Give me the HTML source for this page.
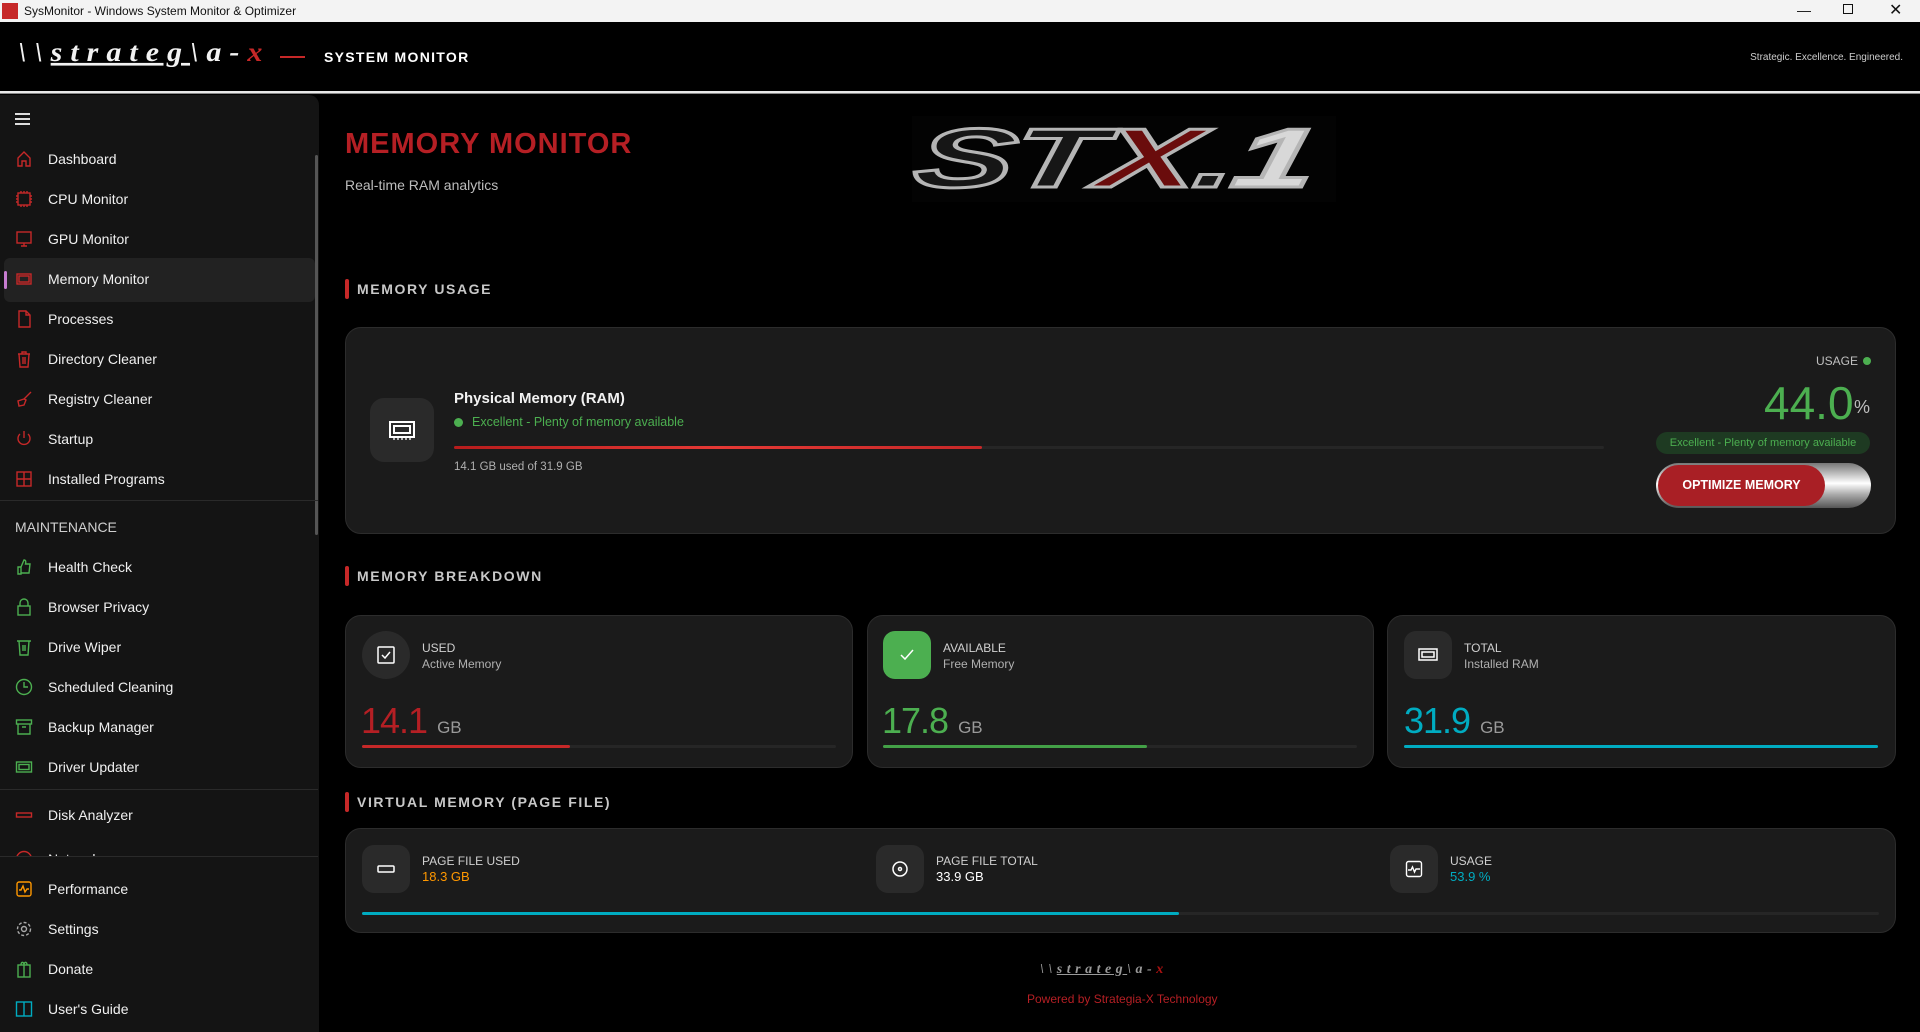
<!DOCTYPE html>
<html><head><meta charset="utf-8">
<style>
*{margin:0;padding:0;box-sizing:border-box}
body{width:1920px;height:1032px;background:#000;font-family:"Liberation Sans",sans-serif;color:#fff;position:relative;overflow:hidden}
.abs{position:absolute}
.tb{left:0;top:0;width:1920px;height:22px;background:#f3f3f3;color:#111;font-size:12px}
.hdr{left:0;top:22px;width:1920px;height:69px;background:#000}
.line{left:0;top:91px;width:1920px;height:3px;background:#e8e8e8;border-bottom:1px solid #888}
.side{left:0;top:95px;width:319px;height:937px;background:#141414;border-top-right-radius:10px}
.it{position:absolute;left:0;width:314px;height:40px;font-size:14px;color:#f0f0f0;display:flex;align-items:center}
.it svg{position:absolute;left:15px;width:18px;height:18px}
.it span{position:absolute;left:48px}
.sep{position:absolute;left:0;width:318px;height:1px;background:#2a2a2a}
.card{position:absolute;background:#1b1b1b;border:1px solid #2c2c2c;border-radius:16px}
.sec{position:absolute;left:345px;font-size:14px;letter-spacing:1.6px;color:#c8c8c8;font-weight:bold;padding-left:12px;height:20px;line-height:20px}
.sec:before{content:"";position:absolute;left:0;top:0;width:4px;height:20px;background:#c62828;border-radius:2px}
.ib{position:absolute;width:48px;height:48px;border-radius:12px;background:#2a2a2a;display:flex;align-items:center;justify-content:center}
.lbl{position:absolute;font-size:12px;color:#d0d0d0;line-height:16px}
.sub{color:#b0b0b0}
.val{position:absolute;font-size:36px;font-weight:300;letter-spacing:-1px}
.val small{font-size:17px;color:#9a9a9a;margin-left:10px;letter-spacing:0}
.track{position:absolute;height:3px;background:#262626;border-radius:2px}
.fill{position:absolute;left:0;top:0;height:3px;border-radius:2px}
</style></head><body>
<div class="abs tb">
  <div class="abs" style="left:2px;top:3px;width:16px;height:16px;background:#c62828"></div>
  <div class="abs" style="left:24px;top:4px">SysMonitor - Windows System Monitor &amp; Optimizer</div>
  <div class="abs" style="left:1797px;top:2px;font-size:14px">&#8212;</div>
  <div class="abs" style="left:1843px;top:4px;width:10px;height:10px;border:1px solid #111"></div>
  <div class="abs" style="left:1889px;top:0px;font-size:16px">&#10005;</div>
</div>
<div class="abs hdr">
  <div class="abs" style="left:18px;top:14px;font-family:'Liberation Serif',serif;font-style:italic;font-weight:bold;font-size:30px;letter-spacing:8px;color:#f2f2f2;transform:scaleY(0.9)">\\<span style="text-decoration:underline">strateg</span>\a-<span style="color:#c62828">x</span></div>
  <div class="abs" style="left:280px;top:34px;width:25px;height:2px;background:#c62828"></div>
  <div class="abs" style="left:324px;top:27px;font-size:14px;font-weight:bold;letter-spacing:1.3px">SYSTEM MONITOR</div>
  <div class="abs" style="right:17px;top:30px;font-size:10px;color:#ccc">Strategic. Excellence. Engineered.</div>
</div>
<div class="abs line"></div>

<div class="abs side">
  <div class="abs" style="left:15px;top:18px;width:15px;height:2px;background:#ddd;box-shadow:0 5px 0 #ddd,0 10px 0 #ddd"></div>
  <div class="abs" style="left:315px;top:60px;width:3px;height:380px;background:#555;border-radius:2px"></div>
</div>
<div class="abs" style="left:4px;top:258px;width:311px;height:44px;background:#222;border-radius:6px"></div>
<div class="abs" style="left:4px;top:271px;width:3px;height:18px;background:#c77dd0;border-radius:2px"></div>

<!-- menu -->
<div class="it" style="top:139px"><svg viewBox="0 0 18 18" fill="none" stroke="#c62828" stroke-width="1.4"><path d="M3 8L9 2l6 6v8h-4v-5H7v5H3z"/></svg><span>Dashboard</span></div>
<div class="it" style="top:179px"><svg viewBox="0 0 18 18" fill="none" stroke="#c62828" stroke-width="1.4"><rect x="3" y="3" width="12" height="12"/><path d="M6 1v2M9 1v2M12 1v2M6 15v2M9 15v2M12 15v2M1 6h2M1 9h2M1 12h2M15 6h2M15 9h2M15 12h2"/></svg><span>CPU Monitor</span></div>
<div class="it" style="top:219px"><svg viewBox="0 0 18 18" fill="none" stroke="#c62828" stroke-width="1.4"><rect x="2" y="2" width="14" height="11"/><path d="M9 13v3M6 16h6"/></svg><span>GPU Monitor</span></div>
<div class="it" style="top:259px"><svg viewBox="0 0 18 18" fill="none" stroke="#c62828" stroke-width="1.4"><rect x="2" y="4" width="14" height="10"/><rect x="4" y="6" width="10" height="6"/></svg><span>Memory Monitor</span></div>
<div class="it" style="top:299px"><svg viewBox="0 0 18 18" fill="none" stroke="#c62828" stroke-width="1.4"><path d="M4 1h7l4 4v12H4z M11 1v4h4"/></svg><span>Processes</span></div>
<div class="it" style="top:339px"><svg viewBox="0 0 18 18" fill="none" stroke="#c62828" stroke-width="1.4"><path d="M3 4h12M7 4V2h4v2M4 4l1 13h8l1-13M8 7v7M10 7v7"/></svg><span>Directory Cleaner</span></div>
<div class="it" style="top:379px"><svg viewBox="0 0 18 18" fill="none" stroke="#c62828" stroke-width="1.4"><path d="M16 2L9 9M9 9l-6 2 1 5 5-1 2-5z"/></svg><span>Registry Cleaner</span></div>
<div class="it" style="top:419px"><svg viewBox="0 0 18 18" fill="none" stroke="#c62828" stroke-width="1.4"><path d="M9 1v7M5 4a6 6 0 1 0 8 0"/></svg><span>Startup</span></div>
<div class="it" style="top:459px"><svg viewBox="0 0 18 18" fill="none" stroke="#c62828" stroke-width="1.4"><rect x="2" y="2" width="14" height="14"/><path d="M9 2v14M2 9h14"/></svg><span>Installed Programs</span></div>
<div class="sep" style="top:500px"></div>
<div class="abs" style="left:15px;top:519px;font-size:14px;color:#cfcfcf">MAINTENANCE</div>
<div class="it" style="top:547px"><svg viewBox="0 0 18 18" fill="none" stroke="#4caf50" stroke-width="1.4"><path d="M3 9h3v7H3zM6 9l3-7c2 0 2 2 1.5 4H15l-1 9H6"/></svg><span>Health Check</span></div>
<div class="it" style="top:587px"><svg viewBox="0 0 18 18" fill="none" stroke="#4caf50" stroke-width="1.4"><rect x="3" y="8" width="12" height="9"/><path d="M5 8V5a4 4 0 0 1 8 0v3"/></svg><span>Browser Privacy</span></div>
<div class="it" style="top:627px"><svg viewBox="0 0 18 18" fill="none" stroke="#4caf50" stroke-width="1.4"><path d="M2 3h14M4 3l1 14h8l1-14M8 7v6M10 7v6"/></svg><span>Drive Wiper</span></div>
<div class="it" style="top:667px"><svg viewBox="0 0 18 18" fill="none" stroke="#4caf50" stroke-width="1.4"><circle cx="9" cy="9" r="7.5"/><path d="M9 4v5h4"/></svg><span>Scheduled Cleaning</span></div>
<div class="it" style="top:707px"><svg viewBox="0 0 18 18" fill="none" stroke="#4caf50" stroke-width="1.4"><rect x="1.5" y="2" width="15" height="4"/><path d="M3 6v10h12V6M7 9h4"/></svg><span>Backup Manager</span></div>
<div class="it" style="top:747px"><svg viewBox="0 0 18 18" fill="none" stroke="#4caf50" stroke-width="1.4"><rect x="1.5" y="4" width="15" height="10"/><rect x="4" y="6.5" width="10" height="5"/></svg><span>Driver Updater</span></div>
<div class="sep" style="top:789px"></div>
<div class="it" style="top:795px"><svg viewBox="0 0 18 18" fill="none" stroke="#c62828" stroke-width="1.4"><rect x="1.5" y="7" width="15" height="4"/></svg><span>Disk Analyzer</span></div>
<div class="abs" style="left:0;top:842px;width:318px;height:14px;overflow:hidden"><div class="it" style="top:-3px"><svg viewBox="0 0 18 18" fill="none" stroke="#c62828" stroke-width="1.4"><circle cx="9" cy="9" r="7.5"/></svg><span>Network</span></div></div>
<div class="sep" style="top:856px"></div>
<div class="it" style="top:869px"><svg viewBox="0 0 18 18" fill="none" stroke="#ff9800" stroke-width="1.4"><rect x="2" y="2" width="14" height="14" rx="2"/><path d="M4 10h2l2-4 2 6 2-3h2"/></svg><span>Performance</span></div>
<div class="it" style="top:909px"><svg viewBox="0 0 18 18" fill="none" stroke="#aaa" stroke-width="1.4"><circle cx="9" cy="9" r="2.5"/><circle cx="9" cy="9" r="6.5" stroke-dasharray="3 2"/></svg><span>Settings</span></div>
<div class="it" style="top:949px"><svg viewBox="0 0 18 18" fill="none" stroke="#4caf50" stroke-width="1.4"><rect x="3" y="5" width="12" height="12"/><path d="M9 5v12M6 5c0-4 3-3 3 0c0-3 3-4 3 0"/></svg><span>Donate</span></div>
<div class="it" style="top:989px"><svg viewBox="0 0 18 18" fill="none" stroke="#00acc1" stroke-width="1.4"><rect x="1.5" y="2" width="15" height="14"/><path d="M9 2v14"/></svg><span>User's Guide</span></div>

<!-- main -->
<div class="abs" style="left:345px;top:128px;font-size:29px;font-weight:bold;color:#b51f24;letter-spacing:1px">MEMORY MONITOR</div>
<div class="abs" style="left:345px;top:177px;font-size:14px;color:#bdbdbd">Real-time RAM analytics</div>
<div class="abs" style="left:912px;top:116px;width:424px;height:86px;background:#030303"></div>
<div class="abs" style="left:925px;top:110px;font-size:84px;font-weight:bold;font-style:italic;letter-spacing:-2px;color:#161616;-webkit-text-stroke:3px #b5b5b5;transform-origin:0 0;transform:scaleX(1.78) skewX(-6deg)">ST<span style="color:#6a0c0c">X</span>.<span style="color:#d8d8d8">1</span></div>

<div class="sec" style="top:279px">MEMORY USAGE</div>
<div class="card" style="left:345px;top:327px;width:1551px;height:207px"></div>
<div class="ib" style="left:370px;top:398px;width:64px;height:64px;border-radius:14px"><svg width="28" height="22" viewBox="0 0 28 22" fill="none" stroke="#fff" stroke-width="2"><rect x="2" y="3" width="24" height="15"/><rect x="6" y="7" width="16" height="7"/><path d="M6 19v2M10 19v2M14 19v2M18 19v2M22 19v2" stroke-width="1.3"/></svg></div>
<div class="abs" style="left:454px;top:390px;font-size:15px;font-weight:bold;color:#f2f2f2">Physical Memory (RAM)</div>
<div class="abs" style="left:454px;top:418px;width:9px;height:9px;border-radius:50%;background:#4caf50"></div>
<div class="abs" style="left:472px;top:415px;font-size:12.5px;color:#4caf50">Excellent - Plenty of memory available</div>
<div class="track" style="left:454px;top:446px;width:1150px"><div class="fill" style="width:528px;background:linear-gradient(90deg,#b71c1c,#e53935,#c62828)"></div></div>
<div class="abs" style="left:454px;top:461px;font-size:11.5px;color:#b0b0b0">14.1 GB used of 31.9 GB</div>
<div class="abs" style="left:1816px;top:354px;font-size:12px;color:#c0c0c0">USAGE</div>
<div class="abs" style="left:1863px;top:357px;width:8px;height:8px;border-radius:50%;background:#4caf50"></div>
<div class="abs" style="left:1764px;top:376px;font-size:46px;font-weight:300;color:#4caf50">44.0</div>
<div class="abs" style="left:1854px;top:397px;font-size:18px;color:#bdbdbd">%</div>
<div class="abs" style="left:1656px;top:432px;width:214px;height:22px;border-radius:11px;background:#1e3a22;color:#4caf50;font-size:11px;text-align:center;line-height:22px">Excellent - Plenty of memory available</div>
<div class="abs" style="left:1656px;top:463px;width:215px;height:45px;border-radius:23px;background:linear-gradient(180deg,#777,#fff 45%,#aaa 70%,#555)"></div>
<div class="abs" style="left:1658px;top:465px;width:167px;height:41px;border-radius:21px;background:#a91f25;color:#fff;font-size:12.5px;font-weight:bold;text-align:center;line-height:41px">OPTIMIZE MEMORY</div>

<div class="sec" style="top:566px">MEMORY BREAKDOWN</div>
<div class="card" style="left:345px;top:615px;width:508px;height:153px"></div>
<div class="card" style="left:867px;top:615px;width:507px;height:153px"></div>
<div class="card" style="left:1387px;top:615px;width:509px;height:153px"></div>
<div class="ib" style="left:362px;top:631px;border-radius:50%"><svg width="20" height="20" viewBox="0 0 20 20" fill="none" stroke="#fff" stroke-width="1.5"><rect x="2" y="2" width="16" height="16" rx="1"/><path d="M6 10l3 3 5-6"/></svg></div>
<div class="ib" style="left:883px;top:631px;background:#4caf50"><svg width="16" height="14" viewBox="0 0 16 14" fill="none" stroke="#fff" stroke-width="1.5"><path d="M2 7l4 4 8-9"/></svg></div>
<div class="ib" style="left:1404px;top:631px"><svg width="20" height="16" viewBox="0 0 20 16" fill="none" stroke="#fff" stroke-width="1.5"><rect x="1" y="2" width="18" height="11"/><rect x="4" y="5" width="12" height="5"/></svg></div>
<div class="lbl" style="left:422px;top:640px">USED<br><span class="sub">Active Memory</span></div>
<div class="lbl" style="left:943px;top:640px">AVAILABLE<br><span class="sub">Free Memory</span></div>
<div class="lbl" style="left:1464px;top:640px">TOTAL<br><span class="sub">Installed RAM</span></div>
<div class="val" style="left:361px;top:700px;color:#b51f24">14.1<small>GB</small></div>
<div class="val" style="left:882px;top:700px;color:#4caf50">17.8<small>GB</small></div>
<div class="val" style="left:1404px;top:700px;color:#00acc1">31.9<small>GB</small></div>
<div class="track" style="left:362px;top:745px;width:474px"><div class="fill" style="width:208px;background:#c62828"></div></div>
<div class="track" style="left:883px;top:745px;width:474px"><div class="fill" style="width:264px;background:#43a047"></div></div>
<div class="track" style="left:1404px;top:745px;width:474px"><div class="fill" style="width:474px;background:#00acc1"></div></div>

<div class="sec" style="top:792px">VIRTUAL MEMORY (PAGE FILE)</div>
<div class="card" style="left:345px;top:828px;width:1551px;height:105px"></div>
<div class="ib" style="left:362px;top:845px"><svg width="18" height="10" viewBox="0 0 18 10" fill="none" stroke="#fff" stroke-width="1.5"><rect x="1" y="2" width="16" height="6" rx="1"/></svg></div>
<div class="ib" style="left:876px;top:845px"><svg width="18" height="18" viewBox="0 0 18 18" fill="none" stroke="#fff" stroke-width="1.5"><circle cx="9" cy="9" r="7"/><circle cx="9" cy="9" r="1.5"/></svg></div>
<div class="ib" style="left:1390px;top:845px"><svg width="18" height="18" viewBox="0 0 18 18" fill="none" stroke="#fff" stroke-width="1.4"><rect x="1.5" y="1.5" width="15" height="15" rx="2"/><path d="M3 10h3l1.5-3 2 5 1.5-3h4"/></svg></div>
<div class="lbl" style="left:422px;top:853px">PAGE FILE USED<br><span style="color:#ff9800;font-size:13px">18.3 GB</span></div>
<div class="lbl" style="left:936px;top:853px">PAGE FILE TOTAL<br><span style="color:#fff;font-size:13px">33.9 GB</span></div>
<div class="lbl" style="left:1450px;top:853px">USAGE<br><span style="color:#00acc1;font-size:13px">53.9 %</span></div>
<div class="track" style="left:362px;top:912px;width:1517px"><div class="fill" style="width:817px;background:#00acc1"></div></div>

<div class="abs" style="left:1040px;top:962px;font-family:'Liberation Serif',serif;font-style:italic;font-weight:bold;font-size:14px;letter-spacing:4.5px;color:#9a9a9a">\\<span style="text-decoration:underline">strateg</span>\a-<span style="color:#a11">x</span></div>
<div class="abs" style="left:1027px;top:992px;font-size:12px;color:#b51f24">Powered by Strategia-X Technology</div>
</body></html>
